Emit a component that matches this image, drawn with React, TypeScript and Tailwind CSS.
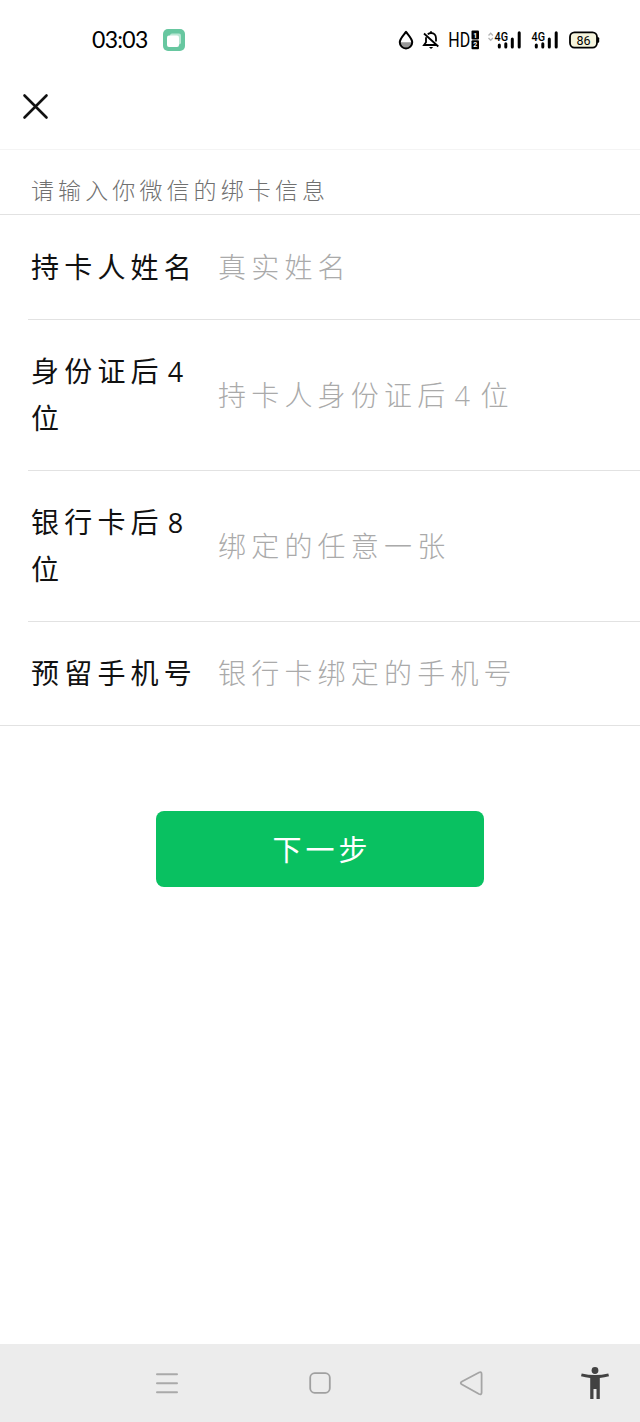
import { clsx } from "clsx";

type Field = {
  label: string;
  digit?: string;
  labelEnd?: string;
  hint: string;
  hintDigit?: string;
  hintEnd?: string;
};

const fields: Field[] = [
  { label: "持卡人姓名", hint: "真实姓名" },
  {
    label: "身份证后",
    digit: "4",
    labelEnd: "位",
    hint: "持卡人身份证后",
    hintDigit: "4",
    hintEnd: "位",
  },
  { label: "银行卡后", digit: "8", labelEnd: "位", hint: "绑定的任意一张" },
  { label: "预留手机号", hint: "银行卡绑定的手机号" },
];

const Digit = ({ children }: { children: string }) => (
  <span className="inline-block w-[30px] pb-1 pl-1 align-baseline font-['Open_Sans','Noto_Sans',sans-serif] text-[27px] leading-none tracking-normal">
    {children}
  </span>
);

const Signal = ({ arrows }: { arrows?: boolean }) => (
  <svg
    width="36"
    height="20"
    viewBox="0 0 36 20"
    className="shrink-0 overflow-visible"
  >
    {arrows && (
      <path
        d="M1.5 5.5 L3.7 3.2 L5.9 5.5 M1.5 8 L3.7 10.3 L5.9 8"
        fill="none"
        stroke="#b5b5b5"
        strokeWidth="1.3"
      />
    )}
    <text
      x="7.5"
      y="11.2"
      fontFamily="Roboto, sans-serif"
      fontSize="13.5"
      fontWeight="500"
      textLength="13.5"
      lengthAdjust="spacingAndGlyphs"
    >
      4G
    </text>
    <path
      d="M12.3 15V17 M18.8 13.7V17 M25.3 9V17 M32.2 2.8V17"
      stroke="#000"
      strokeWidth="3"
      strokeLinecap="round"
    />
  </svg>
);

const StatusBar = () => (
  <div className="flex h-20 items-center pl-[92px] pr-[40px] text-black">
    <span className="w-[71px] pb-px font-['Lato',sans-serif] text-[23px] leading-none tracking-[-0.7px]">
      03:03
    </span>
    <svg width="22" height="22" viewBox="0 0 22 22">
      <rect width="22" height="22" rx="5" fill="#67c7a0" />
      <rect x="7" y="4.5" width="11" height="11" rx="2" fill="#b9e7d3" />
      <rect x="4" y="6.5" width="12" height="11.5" rx="2" fill="#fff" />
    </svg>
    <div className="ml-auto flex items-center">
      <svg width="16" height="20" viewBox="0 0 16 20">
        <path d="M2 12.2h12a6 6 0 0 1-12 0Z" fill="#999" />
        <path
          d="M8 1.8C6 4.6 1.8 8.5 1.8 12.2a6.2 6.2 0 0 0 12.4 0C14.2 8.5 10 4.6 8 1.8Z"
          fill="none"
          stroke="#000"
          strokeWidth="2"
          strokeLinejoin="round"
        />
      </svg>
      <svg width="18" height="20" viewBox="0 0 18 20" className="ml-2">
        <path
          d="M5.8 4.4C6.6 3.5 7.7 3 9 3c3 0 5 2.2 5 5.2v3.2M4 7.2v5.1L2 15h12.2M9 3V1.2M2 3.5l14.3 13"
          fill="none"
          stroke="#000"
          strokeWidth="1.8"
        />
        <path d="M7 17h4.2L9 19Z" fill="#000" />
      </svg>
      <svg
        width="34"
        height="20"
        viewBox="-2 0 34 20"
        className="ml-[7px] overflow-visible"
      >
        <g transform="scale(0.8 1)">
          <text
            x="-1"
            y="16.5"
            fontFamily="Roboto, sans-serif"
            fontSize="20"
          >
            HD
          </text>
        </g>
        <rect x="22.5" y="0.5" width="7.5" height="9" rx="1" />
        <rect x="22.5" y="10.3" width="7.5" height="9" rx="1" />
        <g
          fill="#fff"
          fontFamily="Roboto, sans-serif"
          fontSize="7"
          fontWeight="700"
          textAnchor="middle"
        >
          <text x="26.2" y="7.5">1</text>
          <text x="26.2" y="17.3">2</text>
        </g>
      </svg>
      <div className="ml-[6px] flex gap-[1px]">
        <Signal arrows />
        <Signal />
      </div>
      <svg width="31" height="18" viewBox="0 0 31 18" className="ml-[9px]">
        <path d="M28 6.2h1.2q1 0 1 1v3.6q0 1-1 1H28Z" />
        <rect
          x="1"
          y="1.4"
          width="27"
          height="15.2"
          rx="4.5"
          fill="#f5f4dd"
          stroke="#000"
          strokeWidth="1.8"
        />
        <text
          x="14.5"
          y="13.5"
          fontFamily="Roboto, sans-serif"
          fontSize="12.5"
          textAnchor="middle"
        >
          86
        </text>
      </svg>
    </div>
  </div>
);

const FieldRow = ({ field, last }: { field: Field; last: boolean }) => (
  <div
    className={clsx(
      "flex items-center pt-[27px] pb-[29px]",
      !last && "border-b border-[#e2e2e2]"
    )}
  >
    <div className="w-[190px] shrink-0 pl-[3px] text-[28px] leading-[47px] tracking-[5.2px] text-[#111]">
      {field.label}
      {field.digit && <Digit>{field.digit}</Digit>}
      {field.labelEnd && <div>{field.labelEnd}</div>}
    </div>
    <div className="whitespace-nowrap text-[28px] font-light leading-[47px] tracking-[5.2px] text-[#aaa]">
      {field.hint}
      {field.hintDigit && <Digit>{field.hintDigit}</Digit>}
      {field.hintEnd}
    </div>
  </div>
);

const NavBar = () => (
  <div className="grid h-[78px] grid-cols-[167px_306px_167px] bg-[#ececec]">
    <div className="flex items-center justify-end">
      <svg width="24" height="24" viewBox="0 0 24 24" className="-mr-3">
        <path
          d="M2 3.2h20M2 12.2h20M2 21.2h20"
          stroke="#a9a9a9"
          strokeWidth="2"
          strokeLinecap="round"
        />
      </svg>
    </div>
    <div className="flex items-center justify-center">
      <svg width="24" height="24" viewBox="0 0 24 24">
        <rect
          x="2.2"
          y="2.2"
          width="19.6"
          height="19.6"
          rx="4.5"
          fill="none"
          stroke="#a0a0a0"
          strokeWidth="1.8"
        />
      </svg>
    </div>
    <div className="flex items-center justify-between pr-[30px]">
      <svg width="26" height="26" viewBox="0 0 26 26" className="-ml-[14px]">
        <path
          d="M3 11.5 20 2.5q2.6-1 2.6 1.5v18.5q0 2.5-2.6 1.5L3 14.5q-2.6-1.5 0-3Z"
          fill="none"
          stroke="#a5a5a5"
          strokeWidth="1.8"
          strokeLinejoin="round"
        />
      </svg>
      <svg width="30" height="34" viewBox="0 0 30 34" fill="#424242">
        <circle cx="15" cy="4.5" r="3.4" />
        <path d="M1.7 7.4Q15 10.6 28.3 7.4L29 10.2Q24.5 11.4 19.8 11.9V33H16.5V23H13.5V33H10.2V11.9Q5.5 11.4 1 10.2Z" />
      </svg>
    </div>
  </div>
);

export default function App() {
  return (
    <div className="flex h-[1422px] w-[640px] flex-col bg-white font-['Noto_Sans_CJK_SC',sans-serif]">
      <StatusBar />
      <header className="flex h-[70px] items-start border-b border-[#f4f4f4] pl-[22px] pt-[13px]">
        <svg width="27" height="27" viewBox="0 0 27 27">
          <path
            d="M2.5 2.5l22 22M24.5 2.5l-22 22"
            stroke="#111"
            strokeWidth="2.6"
            strokeLinecap="round"
          />
        </svg>
      </header>
      <p className="flex h-[65px] items-end border-b border-[#e2e2e2] pb-[7px] pl-[31px] text-[23px] font-light leading-[36px] tracking-[4.1px] text-[#707070]">
        请输入你微信的绑卡信息
      </p>
      <main className="border-b border-[#e2e2e2] pl-7 pt-px">
        {fields.map((field, i) => (
          <FieldRow
            key={field.label}
            field={field}
            last={i === fields.length - 1}
          />
        ))}
      </main>
      <button className="mx-auto mt-[85px] h-[76px] w-[328px] rounded-lg bg-[#09c161] pl-1 text-[29px] tracking-[4px] text-white">
        下一步
      </button>
      <div className="mt-auto">
        <NavBar />
      </div>
    </div>
  );
}
